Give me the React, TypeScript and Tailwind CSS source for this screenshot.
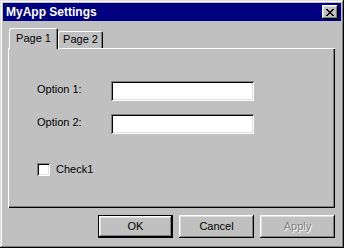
import React from "react";

const raised =
  "shadow-[inset_-1px_-1px_#000,inset_1px_1px_#fff,inset_-2px_-2px_#808080,inset_2px_2px_#dfdfdf]";
const sunken =
  "shadow-[inset_1px_1px_#808080,inset_-1px_-1px_#fff,inset_2px_2px_#000,inset_-2px_-2px_#dfdfdf]";

// Win95 style close glyph, pixel by pixel
const X_ROWS = ["##....##", ".##..##.", "..####..", "...##...", "..####..", ".##..##.", "##....##"];

function CloseGlyph() {
  return (
    <svg width="8" height="7" viewBox="0 0 8 7" shapeRendering="crispEdges">
      {X_ROWS.map((row, y) =>
        row.split("").map((c, x) =>
          c === "#" ? <rect key={`${x}-${y}`} x={x} y={y} width="1" height="1" fill="#000" /> : null
        )
      )}
    </svg>
  );
}

function Field({ label }: { label: string }) {
  return (
    <div className="flex items-center h-[20px]">
      <span className="w-[74px] text-[11px] text-black -mt-[3px]">{label}</span>
      <input className={`w-[143px] h-[20px] bg-white outline-none px-[3px] text-[11px] ${sunken}`} />
    </div>
  );
}

export default function App() {
  return (
    <div
      className={`w-[344px] h-[248px] bg-[#c0c0c0] p-[3px] flex flex-col shadow-[inset_-1px_-1px_#000,inset_1px_1px_#dfdfdf,inset_-2px_-2px_#808080,inset_2px_2px_#fff]`}
      style={{ fontFamily: '"Liberation Sans", Arial, sans-serif' }}
    >
      {/* Title bar */}
      <div className="h-[18px] bg-[#000080] flex items-center justify-between px-[3px]">
        <span className="text-white font-bold text-[12px] leading-none">MyApp Settings</span>
        <button className={`w-[16px] h-[14px] bg-[#c0c0c0] flex items-center justify-center ${raised}`}>
          <CloseGlyph />
        </button>
      </div>

      <div className="pt-[7px] pl-[5px] pr-[6px]">
        {/* Tabs */}
        <div className="flex items-end h-[21px] -mb-[1px] relative z-10 pl-[1px]">
          <div className="w-[49px] h-[21px] bg-[#c0c0c0] rounded-t-[2px] flex items-center justify-center pb-[1px] text-[11px] text-black shadow-[inset_1px_1px_#fff,inset_-1px_0_#000,inset_-2px_0_#808080]">
            Page 1
          </div>
          <div className="w-[45px] h-[17px] mb-[1px] bg-[#c0c0c0] rounded-t-[2px] flex items-center justify-center text-[11px] text-black shadow-[inset_1px_1px_#fff,inset_-1px_0_#000,inset_-2px_0_#808080]">
            Page 2
          </div>
        </div>

        {/* Panel */}
        <div className="h-[160px] bg-[#c0c0c0] pt-[33px] pl-[29px] flex flex-col shadow-[inset_1px_1px_#fff,inset_-1px_-1px_#000,inset_-2px_-2px_#808080]">
          <div className="flex flex-col gap-[13px]">
            <Field label="Option 1:" />
            <Field label="Option 2:" />
          </div>
          <label className="flex items-center gap-[6px] mt-[29px] h-[13px]">
            <span className={`w-[13px] h-[13px] bg-white ${sunken}`} />
            <span className="text-[11px] text-black -mt-[1px]">Check1</span>
          </label>
        </div>

        {/* Buttons */}
        <div className="flex justify-end gap-[6px] mt-[7px]">
          <button className="w-[75px] h-[23px] border border-black bg-[#c0c0c0] p-0">
            <div className={`w-full h-full flex items-center justify-center text-[11px] text-black ${raised}`}>OK</div>
          </button>
          <button className={`w-[75px] h-[23px] bg-[#c0c0c0] flex items-center justify-center text-[11px] text-black ${raised}`}>
            Cancel
          </button>
          <button
            disabled
            className={`w-[75px] h-[23px] bg-[#c0c0c0] flex items-center justify-center text-[11px] text-[#808080] [text-shadow:1px_1px_0_#fff] ${raised}`}
          >
            Apply
          </button>
        </div>
      </div>
    </div>
  );
}
